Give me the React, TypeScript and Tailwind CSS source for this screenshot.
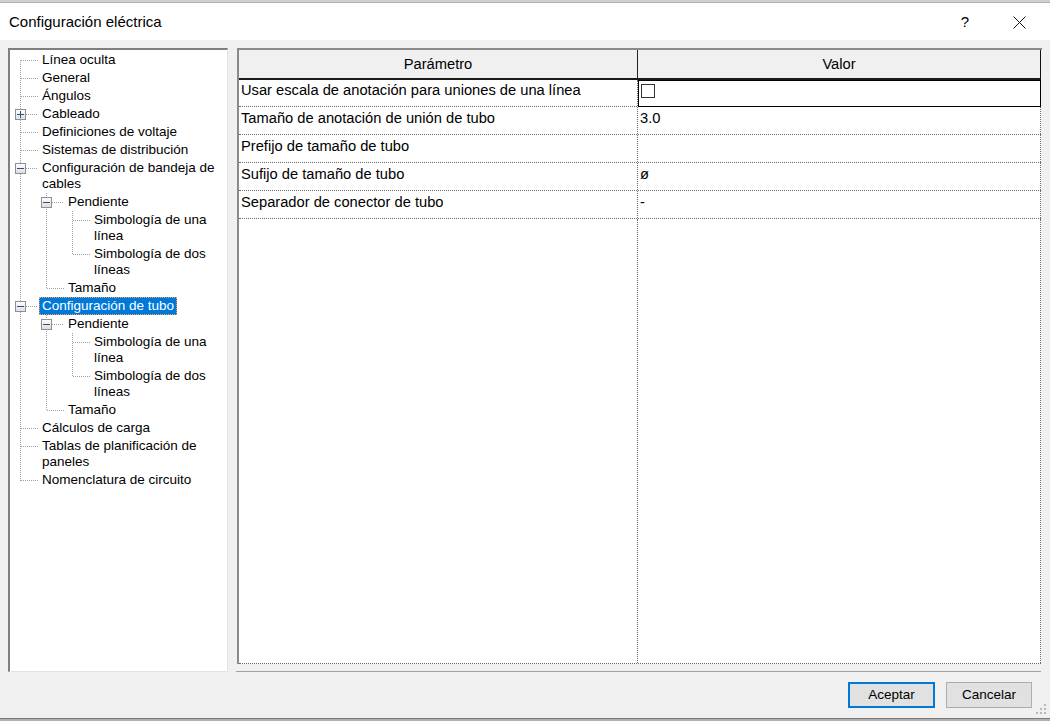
import React from "react";

type Row = { lvl: number; lines: string[]; selected?: boolean };

const rows: Row[] = [
  { lvl: 0, lines: ["Línea oculta"] },
  { lvl: 0, lines: ["General"] },
  { lvl: 0, lines: ["Ángulos"] },
  { lvl: 0, lines: ["Cableado"] },
  { lvl: 0, lines: ["Definiciones de voltaje"] },
  { lvl: 0, lines: ["Sistemas de distribución"] },
  { lvl: 0, lines: ["Configuración de bandeja de", "cables"] },
  { lvl: 1, lines: ["Pendiente"] },
  { lvl: 2, lines: ["Simbología de una", "línea"] },
  { lvl: 2, lines: ["Simbología de dos", "líneas"] },
  { lvl: 1, lines: ["Tamaño"] },
  { lvl: 0, lines: ["Configuración de tubo"], selected: true },
  { lvl: 1, lines: ["Pendiente"] },
  { lvl: 2, lines: ["Simbología de una", "línea"] },
  { lvl: 2, lines: ["Simbología de dos", "líneas"] },
  { lvl: 1, lines: ["Tamaño"] },
  { lvl: 0, lines: ["Cálculos de carga"] },
  { lvl: 0, lines: ["Tablas de planificación de", "paneles"] },
  { lvl: 0, lines: ["Nomenclatura de circuito"] },
];

const padByLvl = ["pl-[29px]", "pl-[55px]", "pl-[81px]"];

function HLine({ y, x1, x2 }: { y: number; x1: number; x2: number }) {
  return (
    <line x1={x1} x2={x2} y1={y + 0.5} y2={y + 0.5} stroke="#a0a0a0" strokeDasharray="1 1" />
  );
}
function VLine({ x, y1, y2 }: { x: number; y1: number; y2: number }) {
  return (
    <line x1={x + 0.5} x2={x + 0.5} y1={y1} y2={y2} stroke="#a0a0a0" strokeDasharray="1 1" />
  );
}
function Box({ cx, cy, plus }: { cx: number; cy: number; plus?: boolean }) {
  return (
    <g>
      <rect x={cx - 4.5} y={cy - 4.5} width={10} height={10} fill="url(#boxg)" stroke="#8e8f8f" />
      <line x1={cx - 3} x2={cx + 4} y1={cy + 0.5} y2={cy + 0.5} stroke="#2f4f82" />
      {plus && <line x1={cx + 0.5} x2={cx + 0.5} y1={cy - 3} y2={cy + 4} stroke="#2f4f82" />}
    </g>
  );
}

function TreeLines() {
  const l0 = [9, 27, 45, 81, 99, 377, 395, 429];
  return (
    <svg className="pointer-events-none" width={218} height={622}>
      <defs>
        <linearGradient id="boxg" x1="0" y1="0" x2="0" y2="1">
          <stop offset="0" stopColor="#ffffff" />
          <stop offset="1" stopColor="#dcdcdc" />
        </linearGradient>
      </defs>
      <VLine x={10} y1={9} y2={430} />
      {l0.map((y) => (
        <HLine key={y} y={y} x1={11} x2={28} />
      ))}
      <HLine y={63} x1={16} x2={28} />
      <HLine y={117} x1={16} x2={28} />
      <HLine y={255} x1={16} x2={28} />
      {/* bandeja children */}
      <VLine x={36} y1={142} y2={238} />
      <HLine y={151} x1={42} x2={54} />
      <HLine y={237} x1={37} x2={54} />
      <VLine x={62} y1={160} y2={204} />
      <HLine y={169} x1={63} x2={80} />
      <HLine y={203} x1={63} x2={80} />
      {/* tubo children */}
      <VLine x={36} y1={264} y2={360} />
      <HLine y={273} x1={42} x2={54} />
      <HLine y={359} x1={37} x2={54} />
      <VLine x={62} y1={282} y2={326} />
      <HLine y={291} x1={63} x2={80} />
      <HLine y={325} x1={63} x2={80} />
      <Box cx={10} cy={63} plus />
      <Box cx={10} cy={117} />
      <Box cx={10} cy={255} />
      <Box cx={36} cy={151} />
      <Box cx={36} cy={273} />
    </svg>
  );
}

const params: { name: string; value: React.ReactNode }[] = [
  { name: "Usar escala de anotación para uniones de una línea", value: null },
  { name: "Tamaño de anotación de unión de tubo", value: "3.0" },
  { name: "Prefijo de tamaño de tubo", value: "" },
  { name: "Sufijo de tamaño de tubo", value: "ø" },
  { name: "Separador de conector de tubo", value: "-" },
];

export default function App() {
  return (
    <div
      className="relative w-[1050px] h-[721px] bg-[#f0f0f0] flex flex-col overflow-hidden text-black"
      style={{ fontFamily: '"Liberation Sans", Arial, sans-serif' }}
    >
      {/* top strip */}
      <div className="h-[3px] shrink-0 bg-[#cfcfcf] border-b border-[#b0b0b0]" />
      {/* title bar */}
      <div className="h-[37px] shrink-0 bg-white flex items-center pl-[9px]">
        <div className="text-[15px] leading-[18px] mt-[1px]">Configuración eléctrica</div>
        <div className="flex-1" />
        <div className="w-[20px] text-center text-[15px] leading-[18px] mr-[38px] mt-[1px]">?</div>
        <svg width="13" height="13" className="mr-[24px] mt-[1px]" viewBox="0 0 13 13">
          <path d="M0.5 0.5 L12.5 12.5 M12.5 0.5 L0.5 12.5" stroke="#111" strokeWidth="1" />
        </svg>
      </div>

      {/* body */}
      <div className="flex shrink-0 pt-[8px] pl-[8px] pr-[8px] h-[632px]">
        {/* tree */}
        <div className="w-[220px] h-[624px] bg-white border-l-2 border-t-2 border-l-[#7f7f7f] border-t-[#7f7f7f] border-r border-b border-r-[#e3e3e3] border-b-[#e3e3e3]">
          <div className="relative w-full h-full text-[13.5px] leading-[16px] pt-[1px]">
            <div className="absolute left-0 top-[1px]">
              <TreeLines />
            </div>
            {rows.map((r, i) => (
              <div key={i} className={"relative " + padByLvl[r.lvl]}>
                <span
                  className={
                    "inline-block px-[3px] py-[1px] whitespace-nowrap " +
                    (r.selected
                      ? "bg-[#0078d7] text-white outline-1 outline-dotted outline-[#f0a060] -outline-offset-1"
                      : "")
                  }
                >
                  {r.lines.map((l, j) => (
                    <div key={j}>{l}</div>
                  ))}
                </span>
              </div>
            ))}
          </div>
        </div>

        {/* grid */}
        <div className="ml-[9px] w-[805px] flex flex-col">
          <div className="h-[616px] flex flex-col border-l-2 border-t-2 border-[#8a8a8a]">
            {/* header */}
            <div className="flex h-[30px] bg-[#f0f0f0] border-b-2 border-[#1a1a1a] text-[14.7px] mr-[1px]">
              <div className="w-[399px] border-r border-[#222] flex items-center justify-center">
                Parámetro
              </div>
              <div className="w-[403px] border-r border-[#111] flex items-center justify-center">
                Valor
              </div>
            </div>
            {/* rows */}
            <div className="flex-1 flex flex-col bg-white mr-[1px] border-b border-dotted border-[#6a6a6a] text-[14.7px] leading-[18px]">
              {params.map((p, i) => (
                <div
                  key={i}
                  className={
                    "flex border-b border-dotted border-[#6a6a6a] " + (i === 0 ? "h-[27px]" : "h-[28px]")
                  }
                >
                  <div
                    className={
                      "w-[399px] border-r border-dotted border-[#6a6a6a] pl-[2px] whitespace-nowrap " +
                      (i === 0 ? "pt-[1px]" : "pt-[2px]")
                    }
                  >
                    {p.name}
                  </div>
                  {i === 0 ? (
                    <div className="w-[403px] border border-black -mb-[1px] pl-[2px] pt-[3px]">
                      <div className="w-[14px] h-[14px] border border-[#333] bg-white" />
                    </div>
                  ) : (
                    <div className="w-[403px] border-r border-dotted border-[#6a6a6a] pl-[2px] pt-[2px]">
                      {p.value}
                    </div>
                  )}
                </div>
              ))}
              <div className="flex-1 flex">
                <div className="w-[399px] border-r border-dotted border-[#6a6a6a]" />
                <div className="w-[403px] border-r border-dotted border-[#6a6a6a]" />
              </div>
            </div>
          </div>
          <div className="mt-[7px] h-[1px] bg-[#a0a0a0] mr-[1px] -ml-[1px]" />
        </div>
      </div>

      {/* buttons */}
      <div className="flex shrink-0 justify-end pr-[18px] mt-[10px] gap-[11px]">
        <button className="w-[87px] h-[26px] bg-[#e1e1e1] border-2 border-[#0078d7] text-[13.5px] leading-[16px]">
          Aceptar
        </button>
        <button className="w-[86px] h-[26px] bg-[#e1e1e1] border border-[#adadad] text-[13.5px] leading-[16px]">
          Cancelar
        </button>
      </div>
      <div className="flex-1" />
      <div className="h-[3px] shrink-0 border-t border-[#7a7a7a] bg-[#b0b0b0]" />

      {/* resize grip */}
      <svg width="10" height="10" viewBox="0 0 10 10" className="absolute right-[4px] bottom-[7px]">
        <rect x="8" y="0" width="2" height="2" fill="#b8b8b8" />
        <rect x="4" y="4" width="2" height="2" fill="#b8b8b8" />
        <rect x="8" y="4" width="2" height="2" fill="#b8b8b8" />
        <rect x="0" y="8" width="2" height="2" fill="#b8b8b8" />
        <rect x="4" y="8" width="2" height="2" fill="#b8b8b8" />
        <rect x="8" y="8" width="2" height="2" fill="#b8b8b8" />
      </svg>
    </div>
  );
}
